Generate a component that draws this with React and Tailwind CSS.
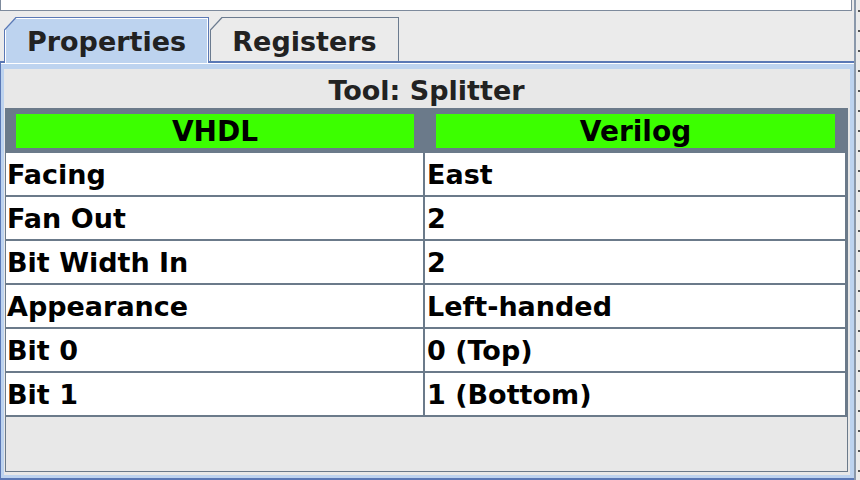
const rows = [
  ["Facing", "East"],
  ["Fan Out", "2"],
  ["Bit Width In", "2"],
  ["Appearance", "Left-handed"],
  ["Bit 0", "0 (Top)"],
  ["Bit 1", "1 (Bottom)"],
];

function Corner({ color }) {
  return (
    <svg className="absolute -left-px -top-px" width="13" height="13" viewBox="0 0 13 13">
      <polygon points="0,0 12,0 0,13" fill="#ebebeb" />
      <line x1="0.5" y1="13" x2="12" y2="0.5" stroke={color} strokeWidth="1.2" />
    </svg>
  );
}

function Tab({ label, active }) {
  if (active) {
    return (
      <div className="relative z-10 -mb-[2px] h-[46px] w-[205px] bg-[#bdd3ef] border-t border-l border-r border-[#5a78b5] shadow-[inset_1px_1px_0_#fff,inset_-1px_0_0_#fff] flex items-center justify-center pt-[1px]">
        <Corner color="#5a78b5" />
        <span className="text-[27px] font-bold text-[#222]">{label}</span>
      </div>
    );
  }
  return (
    <div className="relative ml-[1px] h-[44px] w-[189px] bg-[#ebebeb] border-t border-l border-r border-[#6b7b8f] flex items-center justify-center pt-[4px]">
      <Corner color="#6b7b8f" />
      <span className="text-[27px] font-bold text-[#222]">{label}</span>
    </div>
  );
}

export default function App() {
  return (
    <div className="flex w-[860px] h-[480px] overflow-hidden bg-[#ebebeb] font-['DejaVu_Sans',sans-serif] leading-none">
      <div className="w-[854px] flex flex-col">
        <div className="w-[852px] h-[11px] shrink-0 bg-white border-l border-r border-b border-[#7d8a9c]" />
        <div className="flex items-end h-[50px] shrink-0 pl-[4px]">
          <Tab label="Properties" active />
          <Tab label="Registers" />
        </div>
        <div className="flex-1 flex flex-col border-t-2 border-l border-b-2 border-[#5a78b5] bg-[#bdd3ef] shadow-[inset_0_1px_0_#fff] pt-[6px] pl-[3px] pr-[4px] pb-[3px]">
          <div className="flex-1 flex flex-col bg-[#e8e8e8] pl-[1px] pr-[2px] pb-[3px]">
            <div className="h-[39px] shrink-0 flex items-center justify-center pt-[4px] text-[27px] font-bold text-[#222]">
              Tool: Splitter
            </div>
            <div className="flex-1 border border-[#6b7a8a] bg-[#e8e8e8]">
              <div className="flex h-[44px] bg-[#6b7a8a]">
                <div className="w-[419px] py-[5px] pl-[10px] pr-[11px]">
                  <div className="h-full bg-[#3cff00] flex items-center justify-center pt-[2px] text-[28px] font-bold text-black">VHDL</div>
                </div>
                <div className="flex-1 py-[5px] pl-[11px] pr-[12px]">
                  <div className="h-full bg-[#3cff00] flex items-center justify-center pt-[2px] text-[28px] font-bold text-black">Verilog</div>
                </div>
              </div>
              {rows.map(([k, v]) => (
                <div key={k} className="flex h-[44px] bg-white border-b-2 border-[#6b7a8a]">
                  <div className="w-[419px] border-r-2 border-[#6b7a8a] pl-[1px] flex items-center text-[27px] font-bold text-black">{k}</div>
                  <div className="flex-1 border-r-2 border-[#6b7a8a] pl-[2px] flex items-center text-[27px] font-bold text-black">{v}</div>
                </div>
              ))}
            </div>
          </div>
        </div>
      </div>
      <div className="w-[2px] bg-[#8a98aa]" />
      <div className="w-[4px] flex flex-col pt-[10px] gap-[18px]">
        {Array.from({ length: 24 }).map((_, i) => (
          <div key={i} className="ml-[2px] w-[2px] h-[2px] bg-[#555]" />
        ))}
      </div>
    </div>
  );
}
